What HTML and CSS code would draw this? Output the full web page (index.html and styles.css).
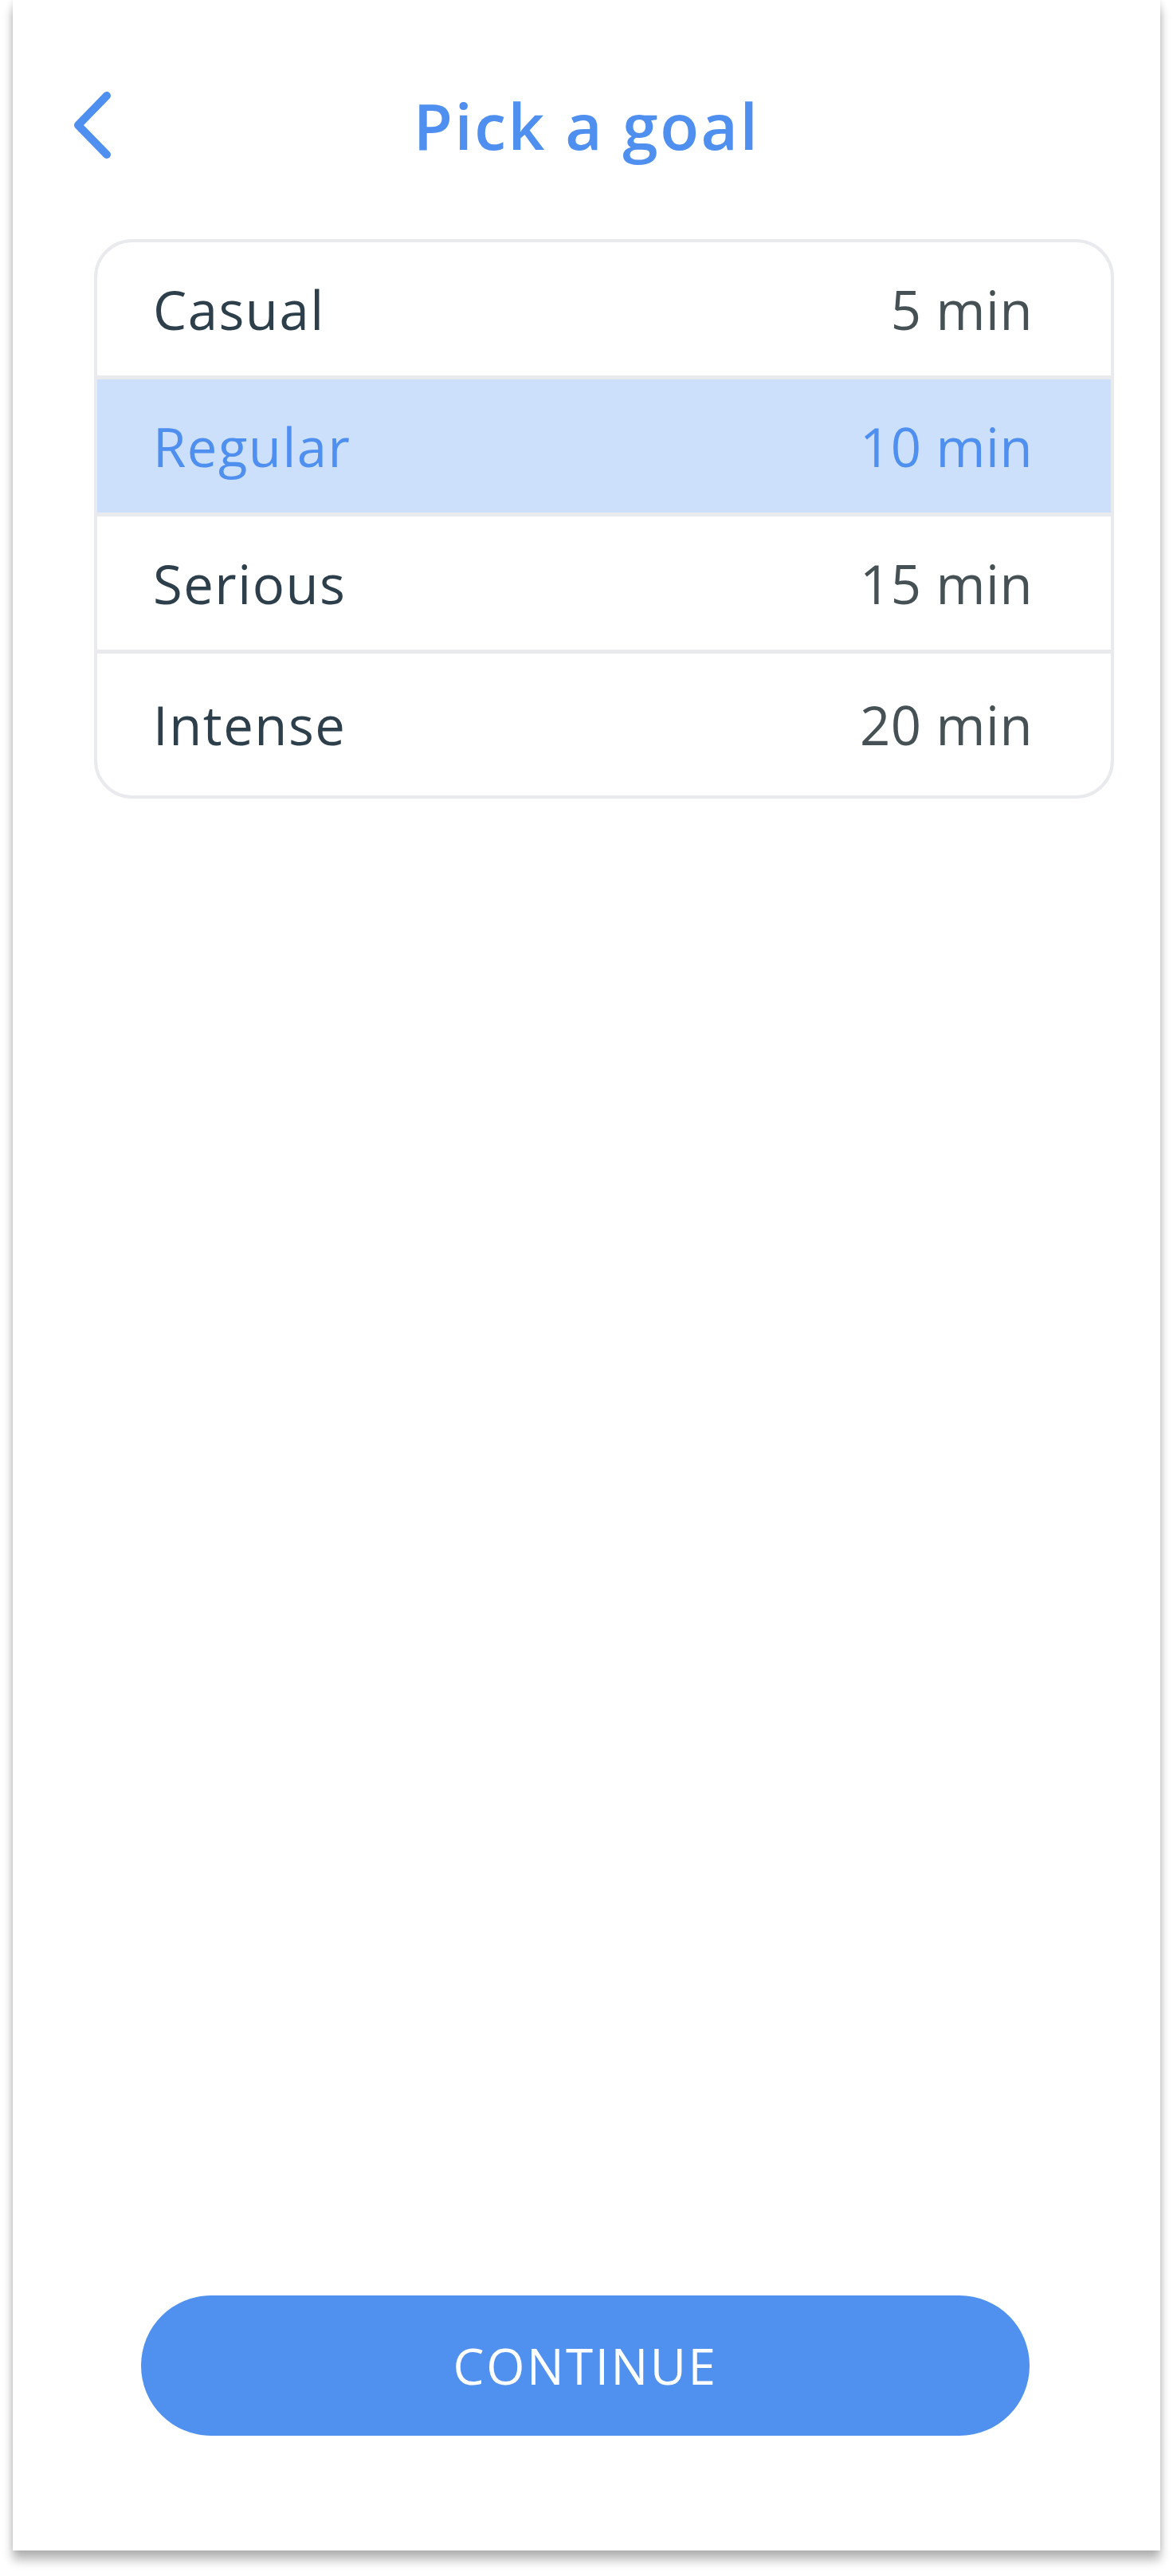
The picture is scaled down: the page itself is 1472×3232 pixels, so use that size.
FILE: index.html
```html
<!DOCTYPE html>
<html lang="en">
<head>
<meta charset="utf-8">
<title>Pick a goal</title>
<link rel="stylesheet" href="styles.css">
</head>
<body>
<div class="screen">
  <header class="header">
    <div class="back">
      <svg class="back-icon" width="50" height="86" viewBox="0 0 50 86" aria-hidden="true">
        <polyline points="43,6 7,43 43,80" fill="none" stroke="#4f8fef" stroke-width="10" stroke-linecap="round" stroke-linejoin="round"/>
      </svg>
    </div>
    <h1 class="title">Pick a goal</h1>
    <div></div>
  </header>

  <ul class="goals">
    <li class="goal"><span class="goal-name">Casual</span><span class="goal-time">5 min</span></li>
    <li class="goal goal-selected"><span class="goal-name">Regular</span><span class="goal-time">10 min</span></li>
    <li class="goal"><span class="goal-name">Serious</span><span class="goal-time">15 min</span></li>
    <li class="goal goal-last"><span class="goal-name">Intense</span><span class="goal-time">20 min</span></li>
  </ul>

  <button class="continue" type="button">CONTINUE</button>
</div>
</body>
</html>
```

FILE: styles.css
```css
* {
  box-sizing: border-box;
}

html, body {
  margin: 0;
  padding: 0;
  background: #ffffff;
}

body {
  font-family: "Open Sans", "Noto Sans", sans-serif;
  width: 1472px;
  height: 3232px;
  overflow: hidden;
}

.screen {
  width: 1440px;
  height: 3200px;
  margin-left: 16px;
  background: #ffffff;
  box-shadow: 0 12px 12px rgba(0, 0, 0, 0.28), 0 0 8px rgba(0, 0, 0, 0.12);
  display: flex;
  flex-direction: column;
}

.header {
  display: grid;
  grid-template-columns: 1fr auto 1fr;
  align-items: center;
  padding-top: 114px;
}

.back {
  display: flex;
  align-items: center;
  padding-left: 75px;
}

.back-icon {
  display: block;
}

.title {
  margin: 0;
  font-size: 80px;
  line-height: 80px;
  font-weight: 600;
  color: #4f8fef;
  letter-spacing: 2.5px;
}

.goals {
  list-style: none;
  margin: 100px 58px 0 102px;
  padding: 0;
  border: 4px solid #e8eaed;
  border-radius: 48px;
  overflow: hidden;
}

.goal {
  display: flex;
  justify-content: space-between;
  align-items: center;
  height: 172px;
  padding: 0 98px 0 70px;
  border-bottom: 5px solid #e8eaed;
  font-size: 67px;
  font-weight: 500;
}

.goal-last {
  height: 178px;
  border-bottom: none;
}

.goal-name {
  color: #2d3f4b;
  letter-spacing: 1.5px;
}

.goal-time {
  color: #465155;
  letter-spacing: 0.5px;
}

.goal-selected {
  background: #cce0fc;
}

.goal-selected .goal-name,
.goal-selected .goal-time {
  color: #4f8fef;
}

.continue {
  margin: auto 164px 144px 161px;
  height: 176px;
  border: none;
  border-radius: 88px;
  background: #5090ef;
  color: #ffffff;
  font-family: "Open Sans", "Noto Sans", sans-serif;
  font-size: 62px;
  font-weight: 400;
  letter-spacing: 2.5px;
  padding: 0;
}
```
